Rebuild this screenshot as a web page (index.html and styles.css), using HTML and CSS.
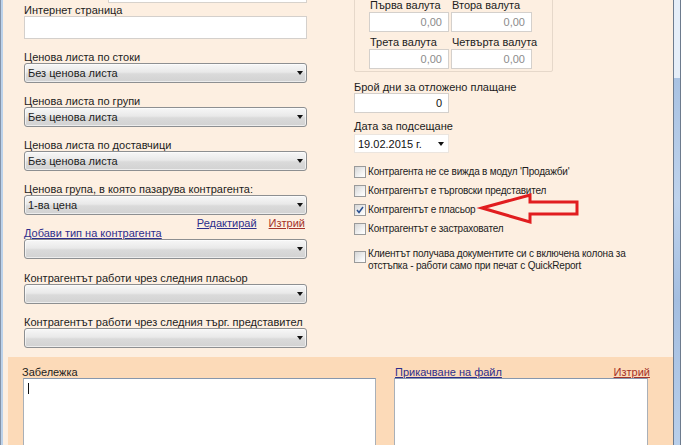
FILE: index.html
```html
<!DOCTYPE html>
<html>
<head>
<meta charset="utf-8">
<link rel="stylesheet" href="styles.css">
</head>
<body>
<div class="window">
  <div class="frame-left"></div>
  <div class="main">
    <div class="top">
      <div class="col-left">
        <div class="stub"></div>
        <div class="lbl lbl-first">Интернет страница</div>
        <div class="input wide"></div>

        <div class="lbl">Ценова листа по стоки</div>
        <div class="select"><span>Без ценова листа</span><i class="caret"></i></div>

        <div class="lbl">Ценова листа по групи</div>
        <div class="select"><span>Без ценова листа</span><i class="caret"></i></div>

        <div class="lbl">Ценова листа по доставчици</div>
        <div class="select"><span>Без ценова листа</span><i class="caret"></i></div>

        <div class="lbl">Ценова група, в която пазарува контрагента:</div>
        <div class="select"><span>1-ва цена</span><i class="caret"></i></div>

        <div class="links">
          <a class="link link-blue add">Добави тип на контрагента</a>
          <div class="links-right">
            <a class="link link-blue">Редактирай</a>
            <a class="link link-red">Изтрий</a>
          </div>
        </div>
        <div class="select"><span></span><i class="caret"></i></div>

        <div class="lbl lbl-13">Контрагентът работи чрез следния пласьор</div>
        <div class="select"><span></span><i class="caret"></i></div>

        <div class="lbl">Контрагентът работи чрез следния търг. представител</div>
        <div class="select"><span></span><i class="caret"></i></div>
      </div>

      <div class="col-right">
        <div class="group">
          <div class="cur-grid">
            <div class="cur">
              <div class="lbl-s">Първа валута</div>
              <div class="input num">0,00</div>
            </div>
            <div class="cur">
              <div class="lbl-s">Втора валута</div>
              <div class="input num">0,00</div>
            </div>
            <div class="cur">
              <div class="lbl-s">Трета валута</div>
              <div class="input num">0,00</div>
            </div>
            <div class="cur">
              <div class="lbl-s">Четвърта валута</div>
              <div class="input num">0,00</div>
            </div>
          </div>
        </div>

        <div class="lbl lbl-days">Брой дни за отложено плащане</div>
        <div class="input days">0</div>

        <div class="lbl lbl-date">Дата за подсещане</div>
        <div class="date"><span>19.02.2015 г.</span><i class="caret"></i></div>

        <div class="checks">
          <label class="check"><span class="cb"></span><span>Контрагента не се вижда в модул 'Продажби'</span></label>
          <label class="check"><span class="cb"></span><span>Контрагентът е търговски представител</span></label>
          <label class="check"><span class="cb checked"><svg width="10" height="10" viewBox="0 0 10 10"><path d="M2 5 L4 7.5 L8 2" fill="none" stroke="#2a4f8f" stroke-width="1.5"/></svg></span><span>Контрагентът е пласьор</span></label>
          <label class="check"><span class="cb"></span><span>Контрагентът е застраховател</span></label>
          <label class="check check-multi"><span class="cb"></span><span>Клиентът получава документите си с включена колона за<br>отстъпка - работи само при печат с QuickReport</span></label>
        </div>
      </div>
    </div>

    <div class="bottom">
      <div class="note">
        <div class="lbl note-lbl">Забележка</div>
        <div class="area"><span class="cursor"></span></div>
      </div>
      <div class="attach">
        <div class="attach-head">
          <a class="link link-blue">Прикачване на файл</a>
          <a class="link link-red">Изтрий</a>
        </div>
        <div class="area area-file"></div>
      </div>
    </div>
  </div>
  <div class="frame-right"></div>

  <svg class="arrow" width="681" height="445" viewBox="0 0 681 445">
    <polygon points="482,208 530,195 530,202 577,202 577,214 530,214 530,222" fill="none" stroke="#e11d1f" stroke-width="3" stroke-linejoin="miter"/>
  </svg>
</div>
</body>
</html>
```

FILE: styles.css
```css
* { box-sizing: border-box; }
html, body { margin: 0; padding: 0; }
body {
  width: 681px;
  height: 445px;
  overflow: hidden;
  font-family: "Liberation Sans", Arial, sans-serif;
  font-size: 11px;
  color: #1c1c1c;
  background: #fdefe1;
}
.window {
  position: relative;
  display: flex;
  width: 681px;
  height: 445px;
}
.frame-left {
  width: 3px;
  flex: none;
  background: linear-gradient(to right, #8593a8 0 1px, #bcd2ea 1px 3px);
}
.frame-right {
  width: 8px;
  flex: none;
  background:
    linear-gradient(to right, #6d7b8e 0 1px, transparent 1px 7px, #6d7b8e 7px),
    linear-gradient(to bottom, #e6eef8 0 78px, #a9c2e2 78px, #bfd3ec 200px, #a4bee0 300px, #b9cfea 445px);
}
.main {
  flex: 1;
  display: flex;
  flex-direction: column;
  background: #fdefe1;
  min-width: 0;
  overflow: hidden;
}
.top {
  flex: none;
  height: 357px;
  display: flex;
  overflow: hidden;
}
.col-left {
  width: 351px;
  padding-left: 21px;
}
.col-right {
  flex: 1;
}

.lbl {
  display: block;
  line-height: 12px;
  height: 12px;
  margin-top: 12px;
  white-space: nowrap;
}
.lbl-first { margin-top: 1px; }
.lbl-13 { margin-top: 13px; }

.stub {
  margin-left: 84px;
  width: 199px;
  height: 3px;
  background: #fff;
  border: 1px solid #d7d2cc;
  border-top: none;
}

.input {
  background: #fff;
  border: 1px solid #d4d0cc;
  height: 20px;
}
.input.wide {
  width: 283px;
  height: 23px;
}
.num {
  text-align: right;
  color: #8c8c8c;
  padding-right: 6px;
  line-height: 18px;
}

.select {
  display: flex;
  align-items: center;
  justify-content: space-between;
  width: 283px;
  height: 20px;
  border: 1px solid #8d8f91;
  border-radius: 3px;
  background: linear-gradient(#f7f7f7, #e9e9e9 45%, #dadada 55%, #d2d2d2);
  padding: 0 3px 0 3px;
  box-shadow: inset 0 0 0 1px rgba(255,255,255,0.6);
}
.caret {
  display: block;
  width: 0;
  height: 0;
  border-left: 3px solid transparent;
  border-right: 3px solid transparent;
  border-top: 4px solid #111;
}

.links {
  display: flex;
  justify-content: space-between;
  width: 283px;
  height: 24px;
}
.add { align-self: flex-end; line-height: 12px; }
.links-right {
  display: flex;
  gap: 12px;
  margin-top: 2px;
  line-height: 12px;
  padding-right: 2px;
}
.link {
  text-decoration: underline;
  cursor: pointer;
  line-height: 12px;
}
.link-blue { color: #2d2e8c; }
.link-red { color: #a4322a; }

/* right column */
.group {
  width: 199px;
  margin-top: -12px;
  border: 1px solid #e6d8ca;
  border-radius: 2px;
  padding: 10px 0 2px 14px;
}
.cur-grid {
  display: grid;
  grid-template-columns: 80px 81px;
  column-gap: 2px;
  row-gap: 4px;
}
.lbl-s {
  line-height: 12px;
  height: 13px;
  padding-left: 1px;
  white-space: nowrap;
}
.lbl-days { margin-top: 9px; }
.input.days {
  width: 95px;
  text-align: right;
  padding-right: 6px;
  line-height: 18px;
  color: #111;
}
.lbl-date { margin-top: 7px; }
.date {
  display: flex;
  align-items: center;
  justify-content: space-between;
  width: 95px;
  height: 19px;
  margin-top: 2px;
  background: #fff;
  border: 1px solid #ebe5df;
  padding: 0 4px 0 3px;
  color: #111;
}

.checks {
  margin-top: 12px;
  display: flex;
  flex-direction: column;
  gap: 6px;
  font-size: 10px;
  letter-spacing: -0.2px;
}
.check {
  display: flex;
  align-items: center;
  gap: 2px;
  height: 13px;
  line-height: 12px;
  white-space: nowrap;
}
.check-multi {
  margin-top: 6px;
  height: auto;
  align-items: flex-start;
  padding-top: 1px;
}
.check-multi .cb { margin-top: 3px; }
.cb {
  display: flex;
  align-items: center;
  justify-content: center;
  width: 12px;
  height: 12px;
  flex: none;
  border: 1px solid #9a9a9a;
  background: linear-gradient(135deg, #d6d6d6, #f6f6f6 70%, #ffffff);
}

/* bottom */
.bottom {
  flex: 1;
  margin-left: 5px;
  background: #fcdab8;
  display: flex;
  padding-top: 9px;
  overflow: hidden;
}
.note {
  width: 367px;
  padding-left: 14px;
}
.note-lbl { margin-top: 0; }
.area {
  height: 80px;
  background: #fff;
  border: 1px solid #a9b0b8;
  border-top-color: #8797ad;
}
.note .area {
  margin-left: 1px;
  width: 353px;
  padding: 4px 0 0 4px;
}
.cursor {
  display: block;
  width: 1px;
  height: 11px;
  background: #111;
}
.attach {
  margin-left: 19px;
  width: 256px;
}
.attach-head {
  display: flex;
  justify-content: space-between;
  height: 12px;
  padding-left: 1px;
}
.area-file { width: 254px; }

.arrow {
  position: absolute;
  left: 0;
  top: 0;
  pointer-events: none;
}
```
